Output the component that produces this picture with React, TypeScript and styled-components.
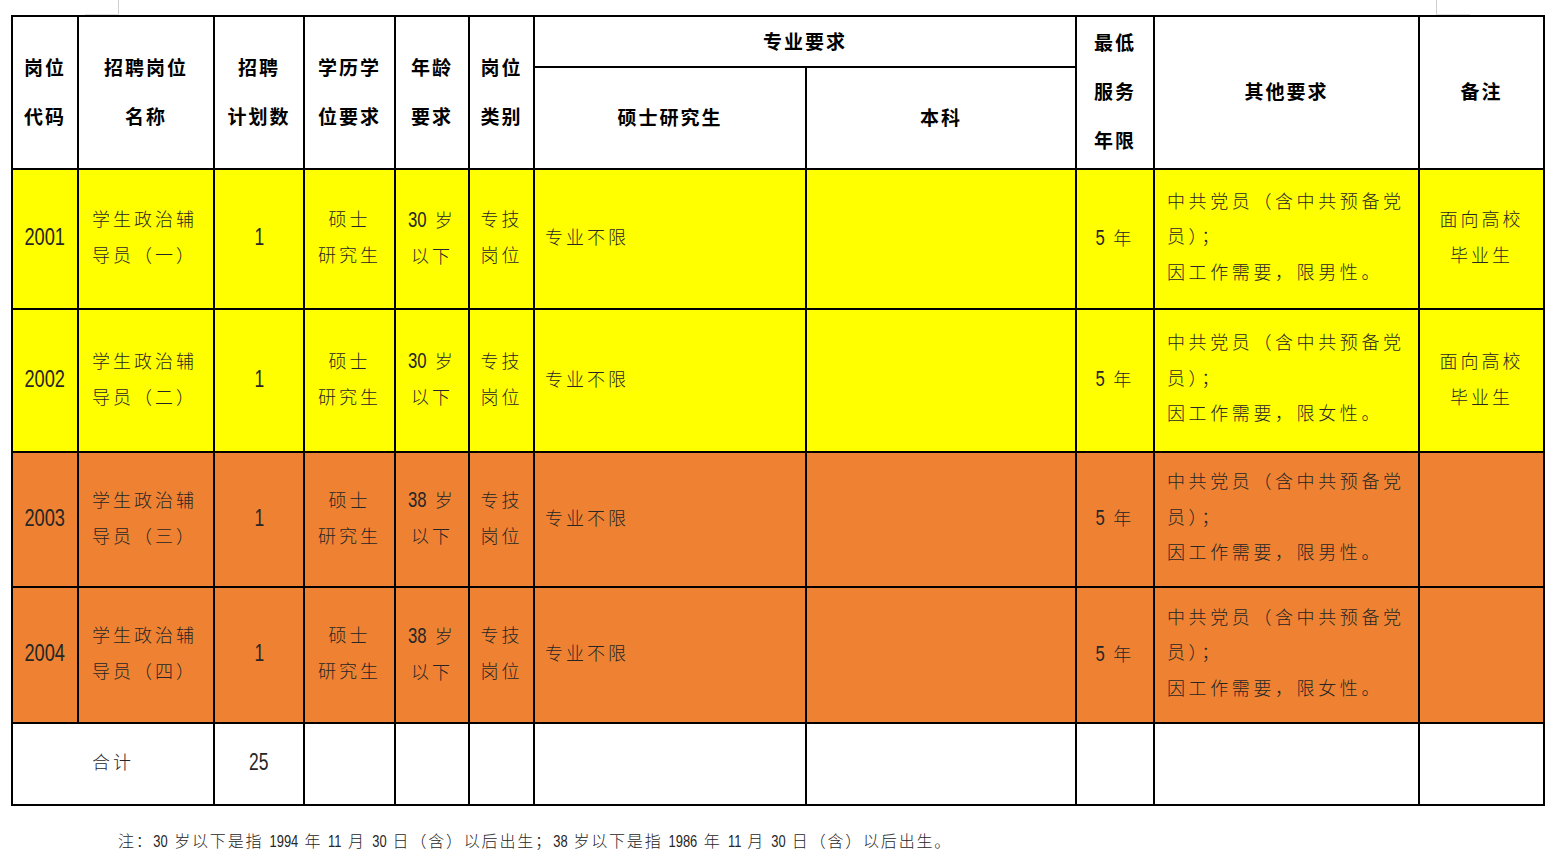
import React from "react";
import styled, { createGlobalStyle } from "styled-components";

const GlobalStyle = createGlobalStyle`
    html, body {
        margin: 0;
        padding: 0;
        background: #FFFFFF;
    }
`;

const YELLOW = '#FFFF00';
const ORANGE = '#EE8232';
const BODY_FONT = `"Liberation Sans", "Noto Sans CJK SC", sans-serif`;
const NARROW = 0.76; // digits in the sheet are set in a narrow face
const DIGIT_W = 0.556;

const Page = styled.div`
    position: relative;
    width: 1556px;
    height: 860px;
    padding-top: 15px;
    box-sizing: border-box;
    overflow: hidden;
`;

const CropMark = styled.div<{ $left: number; $side: 'left' | 'right' }>`
    position: absolute;
    top: 0;
    left: ${p => p.$left}px;
    width: 1px;
    height: 15px;
    background: #CFCFCF;

    &::after {
        content: '';
        position: absolute;
        bottom: 0;
        ${p => p.$side === 'left' ? 'right: 0;' : 'left: 0;'}
        width: 34px;
        height: 1px;
        background: #E2E2E2;
    }
`;

const Table = styled.table`
    margin-left: 11px;
    width: 1532px;
    border-collapse: collapse;
    table-layout: fixed;
`;

const HeadCell = styled.th<{ $h?: number; $compact?: boolean }>`
    height: ${p => p.$h ?? 0}px;
    padding: 0 0 ${p => p.$compact ? 2 : 4}px;
    border: 2px solid #000;
    background: #FFFFFF;
    color: #000;
    font-family: "Noto Sans CJK SC", sans-serif;
    font-weight: 700;
    font-size: 19px;
    line-height: ${p => p.$compact ? 30 : 49}px;
    letter-spacing: 2px;
    text-align: center;
    vertical-align: middle;
`;

const Row = styled.tr<{ $bg: string; $h: number }>`
    height: ${p => p.$h}px;
    background: ${p => p.$bg};
`;

const Cell = styled.td<{ $align?: 'left' | 'center'; $pad?: number }>`
    padding: 0 ${p => p.$pad ?? 0}px 2px;
    border: 2px solid #000;
    color: #262626;
    font-family: ${BODY_FONT};
    font-weight: 300;
    font-size: 18px;
    line-height: 36px;
    letter-spacing: 3px;
    text-align: ${p => p.$align ?? 'center'};
    vertical-align: middle;
    white-space: nowrap;
`;

const NumSpan = styled.span<{ $n: number; $size: number }>`
    display: inline-block;
    font-family: "Liberation Sans", sans-serif;
    font-weight: 400;
    font-size: ${p => p.$size}px;
    letter-spacing: 0;
    transform: scaleX(${NARROW});
    margin: 0 ${p => -(p.$n * DIGIT_W * p.$size * (1 - NARROW)) / 2}px;
`;

function Num({ v, size }: { v: string; size: number }) {
    return <NumSpan $n={v.length} $size={size}>{v}</NumSpan>;
}

const OtherText = styled.div`
    line-height: 35.5px;
    letter-spacing: 3.6px;
`;

const Note = styled.div`
    margin: 25px 0 0 118px;
    color: #262626;
    font-family: ${BODY_FONT};
    font-weight: 300;
    font-size: 16px;
    line-height: 22px;
    letter-spacing: 1.8px;
    white-space: nowrap;
`;

interface JobRow {
    code: string;
    name: [string, string];
    age: string;
    gender: string;
    note: boolean;
    bg: string;
    h: number;
}

const rows: JobRow[] = [
    { code: '2001', name: ['学生政治辅', '导员（一）'], age: '30', gender: '男', note: true, bg: YELLOW, h: 140 },
    { code: '2002', name: ['学生政治辅', '导员（二）'], age: '30', gender: '女', note: true, bg: YELLOW, h: 143 },
    { code: '2003', name: ['学生政治辅', '导员（三）'], age: '38', gender: '男', note: false, bg: ORANGE, h: 135 },
    { code: '2004', name: ['学生政治辅', '导员（四）'], age: '38', gender: '女', note: false, bg: ORANGE, h: 136 },
];

const colWidths = [66, 136, 90, 91, 74, 65, 272, 270, 78, 265, 125];

function App() {
    return (
        <Page>
            <GlobalStyle />
            <CropMark $left={118} $side="left" />
            <CropMark $left={1436} $side="right" />
            <Table>
                <colgroup>
                    {colWidths.map((w, i) => <col key={i} style={{ width: w }} />)}
                </colgroup>
                <thead>
                    <tr>
                        <HeadCell rowSpan={2}>岗位<br />代码</HeadCell>
                        <HeadCell rowSpan={2}>招聘岗位<br />名称</HeadCell>
                        <HeadCell rowSpan={2}>招聘<br />计划数</HeadCell>
                        <HeadCell rowSpan={2}>学历学<br />位要求</HeadCell>
                        <HeadCell rowSpan={2}>年龄<br />要求</HeadCell>
                        <HeadCell rowSpan={2}>岗位<br />类别</HeadCell>
                        <HeadCell colSpan={2} $h={47} $compact>专业要求</HeadCell>
                        <HeadCell rowSpan={2}>最低<br />服务<br />年限</HeadCell>
                        <HeadCell rowSpan={2}>其他要求</HeadCell>
                        <HeadCell rowSpan={2}>备注</HeadCell>
                    </tr>
                    <tr>
                        <HeadCell $h={97} $compact>硕士研究生</HeadCell>
                        <HeadCell $h={97} $compact>本科</HeadCell>
                    </tr>
                </thead>
                <tbody>
                    {rows.map(r => (
                        <Row key={r.code} $bg={r.bg} $h={r.h}>
                            <Cell><Num v={r.code} size={24} /></Cell>
                            <Cell $align="left" $pad={13}>{r.name[0]}<br />{r.name[1]}</Cell>
                            <Cell><Num v="1" size={23} /></Cell>
                            <Cell>硕士<br />研究生</Cell>
                            <Cell><Num v={r.age} size={22} /> 岁<br />以下</Cell>
                            <Cell>专技<br />岗位</Cell>
                            <Cell $align="left" $pad={10}>专业不限</Cell>
                            <Cell />
                            <Cell><Num v="5" size={22} /> 年</Cell>
                            <Cell $align="left" $pad={12}>
                                <OtherText>
                                    中共党员（含中共预备党<br />员）；<br />因工作需要，限{r.gender}性。
                                </OtherText>
                            </Cell>
                            <Cell>{r.note ? <>面向高校<br />毕业生</> : null}</Cell>
                        </Row>
                    ))}
                    <Row $bg="#FFFFFF" $h={82}>
                        <Cell colSpan={2}>合计</Cell>
                        <Cell><Num v="25" size={23} /></Cell>
                        <Cell />
                        <Cell />
                        <Cell />
                        <Cell />
                        <Cell />
                        <Cell />
                        <Cell />
                        <Cell />
                    </Row>
                </tbody>
            </Table>
            <Note>
                注：<Num v="30" size={17} /> 岁以下是指 <Num v="1994" size={17} /> 年 <Num v="11" size={17} /> 月 <Num v="30" size={17} /> 日（含）以后出生；
                <Num v="38" size={17} /> 岁以下是指 <Num v="1986" size={17} /> 年 <Num v="11" size={17} /> 月 <Num v="30" size={17} /> 日（含）以后出生。
            </Note>
        </Page>
    );
}

export default App;
